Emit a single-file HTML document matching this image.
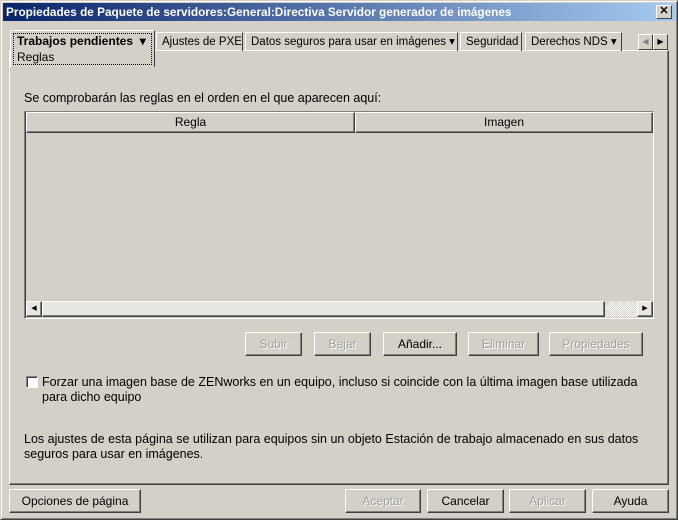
<!DOCTYPE html>
<html><head><meta charset="utf-8"><style>
*{box-sizing:border-box;margin:0;padding:0}
body{width:678px;height:520px;background:#d4d0c8;font-family:"Liberation Sans",sans-serif;font-size:12.5px;color:#000;position:relative;overflow:hidden}
.a{position:absolute}
.win{left:0;top:0;width:678px;height:520px;border:1px solid;border-color:#d4d0c8 #404040 #404040 #d4d0c8;box-shadow:inset 1px 1px #fff,inset -1px -1px #808080}
.title{left:3px;top:3px;width:672px;height:18px;background:linear-gradient(90deg,#0a246a,#a6caf0);color:#fff;font-weight:bold;font-size:11.8px;line-height:18px;padding-left:3px}
.close{left:656px;top:5px;width:16px;height:14px;background:#d4d0c8;border:1px solid;border-color:#fff #404040 #404040 #fff;font-size:11px;line-height:11px;text-align:center;font-weight:bold}
.btn{position:absolute;height:24px;border:1px solid;border-color:#fff #404040 #404040 #fff;box-shadow:inset -1px -1px #808080;text-align:center;line-height:22px;font-size:12px}
.dis{color:#a0a0a0;text-shadow:1px 1px #fff}
.tab{position:absolute;top:32px;height:19px;border:1px solid;border-color:#fff #404040 transparent #fff;border-bottom:none;line-height:18px;padding-left:5px;font-size:11.5px;white-space:nowrap;overflow:hidden}
</style></head><body>
<div class="a win"></div>
<div class="a title">Propiedades de Paquete de servidores:General:Directiva Servidor generador de imágenes</div>
<div class="a close">✕</div>
<div class="a" style="left:9px;top:50px;width:660px;height:435px;border:1px solid;border-color:#fff #404040 #404040 #fff;box-shadow:inset -1px -1px #808080"></div>
<div class="tab" style="left:156px;width:87px">Ajustes de PXE</div>
<div class="tab" style="left:245px;width:213px">Datos seguros para usar en imágenes ▾</div>
<div class="tab" style="left:460px;width:62px">Seguridad</div>
<div class="tab" style="left:525px;width:97px">Derechos NDS ▾</div>
<div class="a" style="left:638px;top:34px;width:15px;height:16px;border:1px solid;border-color:#fff #404040 #404040 #fff;color:#808080;font-size:8px;text-align:center;line-height:14px">◀</div>
<div class="a" style="left:653px;top:34px;width:15px;height:16px;border:1px solid;border-color:#fff #404040 #404040 #fff;font-size:8px;text-align:center;line-height:14px">▶</div>
<div class="a" style="left:10px;top:30px;width:145px;height:37px;background:#d4d0c8;border:1px solid;border-color:#fff #404040 transparent #fff;border-bottom:none"></div>
<div class="a" style="left:13px;top:33px;width:139px;height:32px;border:1px dotted #000"></div>
<div class="a" style="left:17px;top:34px;font-weight:bold;font-size:12px">Trabajos pendientes &nbsp;▾</div>
<div class="a" style="left:17px;top:50px;font-size:12px">Reglas</div>
<div class="a" style="left:24px;top:91px">Se comprobarán las reglas en el orden en el que aparecen aquí:</div>
<div class="a" style="left:24px;top:111px;width:630px;height:208px;border:1px solid;border-color:#808080 #fff #fff #808080;box-shadow:inset 1px 1px #404040"></div>
<div class="a btn" style="left:26px;top:112px;width:329px;height:21px;line-height:19px">Regla</div>
<div class="a btn" style="left:355px;top:112px;width:298px;height:21px;line-height:19px">Imagen</div>
<div class="a" style="left:26px;top:301px;width:627px;height:16px;background:#e8e6e1"></div>
<div class="a btn" style="left:26px;top:301px;width:16px;height:16px;font-size:7px;line-height:13px">◀</div>
<div class="a btn" style="left:42px;top:301px;width:563px;height:16px"></div>
<div class="a" style="left:605px;top:301px;width:32px;height:16px;background:repeating-conic-gradient(#fff 0 25%,#d4d0c8 0 50%) 0 0/2px 2px"></div>
<div class="a btn" style="left:637px;top:301px;width:16px;height:16px;font-size:7px;line-height:13px">▶</div>
<div class="btn dis" style="left:245px;top:332px;width:57px">Subir</div>
<div class="btn dis" style="left:314px;top:332px;width:57px">Bajar</div>
<div class="btn" style="left:383px;top:332px;width:74px">Añadir...</div>
<div class="btn dis" style="left:468px;top:332px;width:71px">Eliminar</div>
<div class="btn dis" style="left:549px;top:332px;width:94px">Propiedades</div>
<div class="a" style="left:26px;top:376px;width:12px;height:12px;background:#fff;border:1px solid;border-color:#808080 #fff #fff #808080;box-shadow:inset 1px 1px #404040"></div>
<div class="a" style="left:42px;top:375px;line-height:15px;width:630px">Forzar una imagen base de ZENworks en un equipo, incluso si coincide con la última imagen base utilizada<br>para dicho equipo</div>
<div class="a" style="left:24px;top:432px;line-height:15px;width:640px">Los ajustes de esta página se utilizan para equipos sin un objeto Estación de trabajo almacenado en sus datos<br>seguros para usar en imágenes.</div>
<div class="btn" style="left:9px;top:489px;width:132px">Opciones de página</div>
<div class="btn dis" style="left:345px;top:489px;width:76px">Aceptar</div>
<div class="btn" style="left:427px;top:489px;width:77px">Cancelar</div>
<div class="btn dis" style="left:509px;top:489px;width:77px">Aplicar</div>
<div class="btn" style="left:592px;top:489px;width:77px">Ayuda</div>
</body></html>
